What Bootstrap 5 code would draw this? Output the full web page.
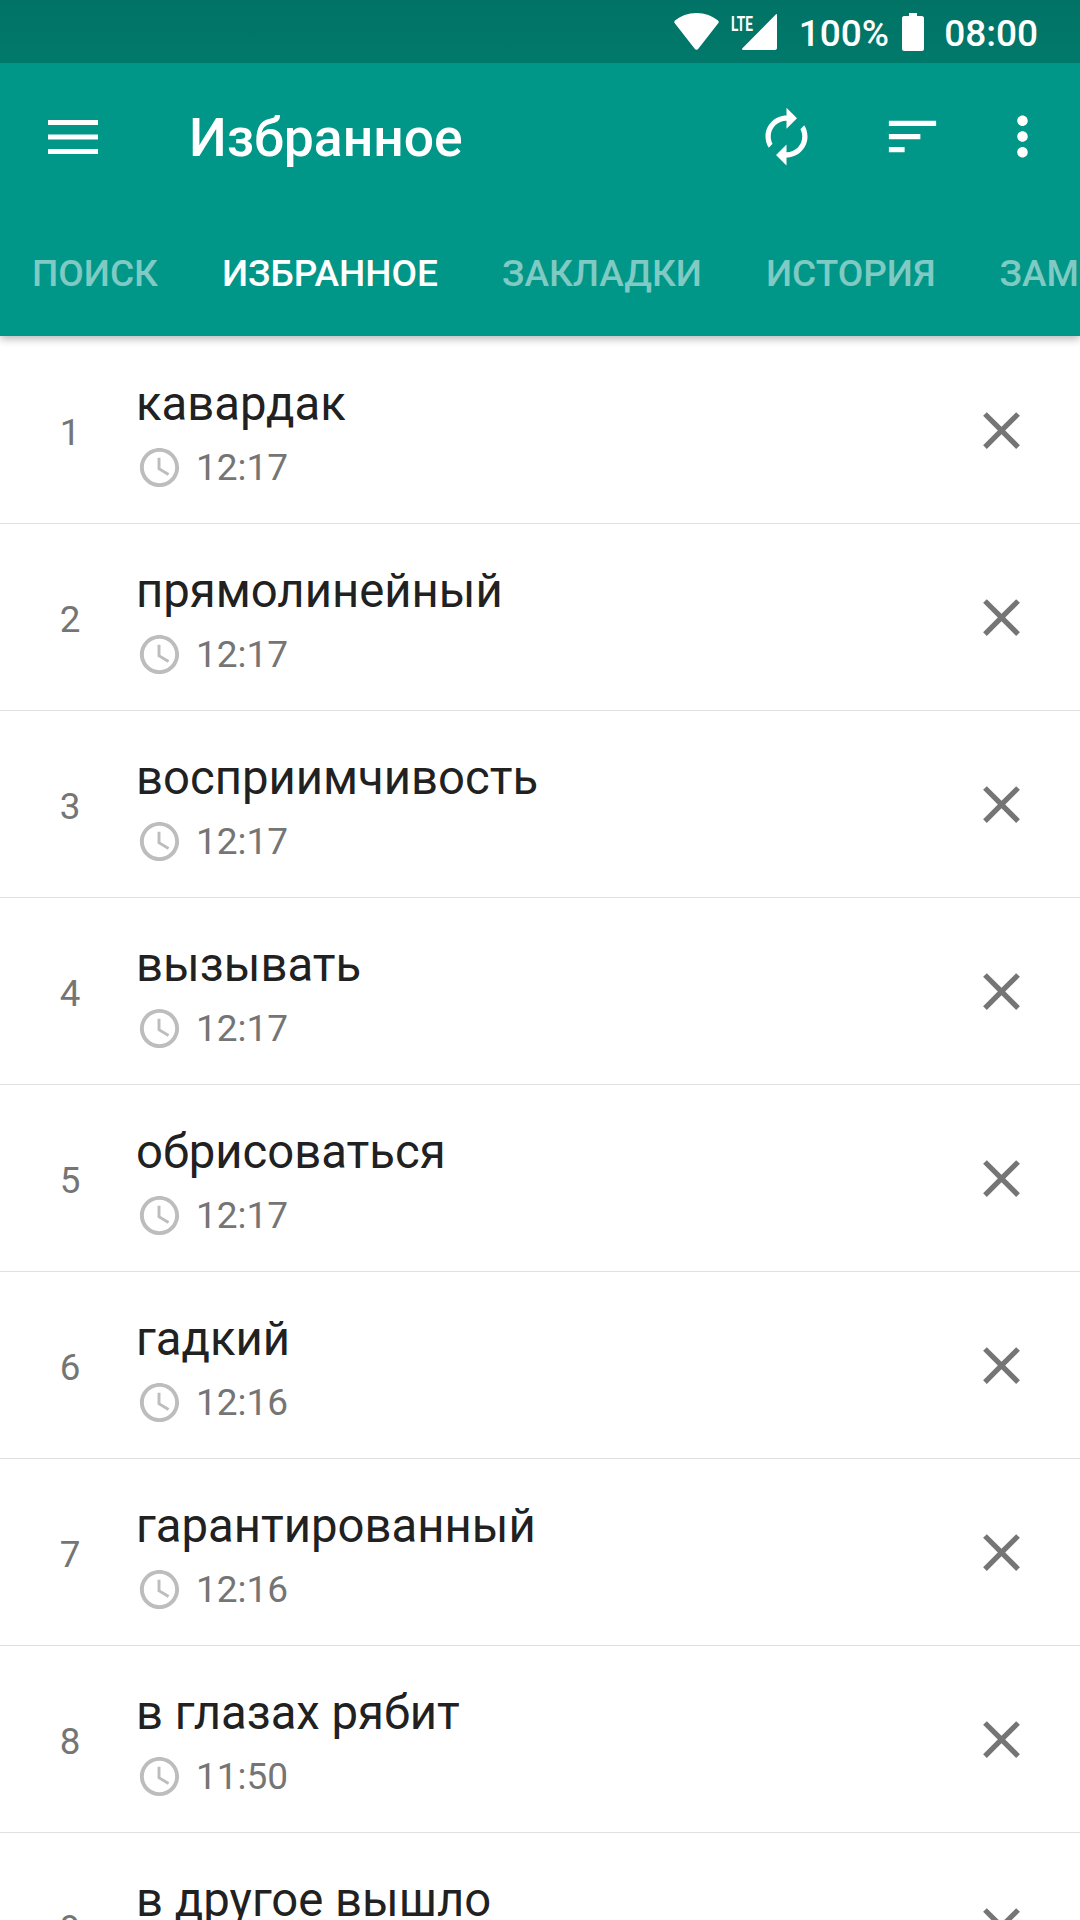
<!DOCTYPE html>
<html lang="ru">

<head>
    <meta charset="UTF-8">
    <meta name="viewport" content="width=device-width, initial-scale=1.0">
    <title>Избранное</title>

    <link href="https://cdn.jsdelivr.net/npm/bootstrap@5.3.0/dist/css/bootstrap.min.css" rel="stylesheet">
    <style>
        html, body {
            height: 100%;
            overflow: hidden;
        }

        body {
            font-family: Roboto, "Liberation Sans", sans-serif;
            background: #fff;
        }

        .app-header {
            background: #009688;
            color: #fff;
            box-shadow: 0 3px 8px rgba(0, 0, 0, 0.28);
            position: relative;
            z-index: 2;
        }

        .status-bar {
            height: 63px;
            background: linear-gradient(#007366, #00796b);
            padding-right: 42px;
            font-size: 37px;
            font-weight: 500;
            line-height: 1;
        }

        .status-bar svg {
            fill: #fff;
            display: block;
        }

        .status-text {
            padding-top: 4px;
        }

        .percent-text {
            margin-left: 21px;
        }

        .battery-icon {
            margin-left: 13px;
            margin-right: 20px;
        }

        .lte-mark {
            font-size: 20px;
            font-weight: 700;
            line-height: 1;
            width: 24px;
            height: 36px;
            margin-left: 12px;
            margin-right: -13px;
            transform: scaleX(0.68);
            transform-origin: left top;
        }

        .tool-bar {
            height: 147px;
            padding-right: 10px;
        }

        .tool-bar svg {
            fill: #fff;
            display: block;
        }

        .menu-slot {
            width: 189px;
            padding-left: 48px;
        }

        .screen-title {
            font-size: 53.5px;
            font-weight: 500;
            margin: 0;
            padding-top: 3px;
        }

        .tool-btn {
            width: 126px;
        }

        .tool-btn-narrow {
            width: 95px;
        }

        .tab-strip {
            height: 126px;
            overflow: hidden;
        }

        .tab-item {
            font-size: 37px;
            font-weight: 500;
            padding: 2px 32px 0;
            color: rgba(255, 255, 255, 0.5);
            white-space: nowrap;
        }

        .tab-item.is-current {
            color: #fff;
        }

        .word-list {
            padding-top: 1px;
        }

        .word-row {
            height: 187px;
            padding: 0;
            border-color: #e0e0e0;
            border-width: 0 0 2px;
        }

        .word-num {
            width: 136px;
            padding-left: 4px;
            padding-top: 5px;
            text-align: center;
            font-size: 36.75px;
            color: #757575;
        }

        .word-body {
            padding-top: 6px;
        }

        .word-text {
            font-size: 47.25px;
            line-height: 56px;
            color: #212121;
        }

        .word-time {
            font-size: 37px;
            line-height: 47px;
            color: #757575;
            margin-top: 12px;
        }

        .word-time svg {
            fill: #bdbdbd;
            margin-right: 13px;
            margin-left: 0;
        }

        .word-remove {
            margin-right: 47px;
            fill: #757575;
        }
    </style>
</head>

<body>
    <header class="app-header">
        <div class="status-bar d-flex align-items-center justify-content-end">
            <svg width="45" height="37" viewBox="0 0 45 37"><path d="M22.500 0C14 0 6.500 3 1 7.500c-1 1-1 2 0 3l19.500 25c1 1.600 3 1.600 4 0L44 10.500c1-1 1-2 0-3C38.500 3 31 0 22.500 0z"/></svg>
            <span class="lte-mark">LTE</span>
            <svg width="36" height="36" viewBox="0 0 36 36"><path d="M35 0v34c0 1-1 2-2 2H1c-1 0-1.300-1-.6-1.700L34 .3c.4-.4 1-.3 1 .7z"/></svg>
            <span class="status-text percent-text">100%</span>
            <svg class="battery-icon" width="22" height="38" viewBox="0 0 22 38"><path d="M7 0h8v3h5c1 0 2 1 2 2v31c0 1-1 2-2 2H2c-1 0-2-1-2-2V5c0-1 1-2 2-2h5z"/></svg>
            <span class="status-text">08:00</span>
        </div>
        <div class="tool-bar d-flex align-items-center">
            <div class="menu-slot">
                <svg width="50" height="34" viewBox="0 0 50 34"><path d="M0 0h50v5H0zM0 14.500h50v5H0zM0 29h50v5H0z"/></svg>
            </div>
            <h1 class="screen-title flex-grow-1">Избранное</h1>
            <div class="tool-btn d-flex justify-content-center">
                <svg width="63" height="63" viewBox="0 0 24 24"><path d="M12 6v3l4-4-4-4v3c-4.420 0-8 3.580-8 8 0 1.570.46 3.030 1.240 4.260L6.700 14.800c-.45-.83-.7-1.790-.7-2.800 0-3.310 2.690-6 6-6zm6.760 1.740L17.300 9.200c.44.84.7 1.790.7 2.800 0 3.310-2.690 6-6 6v-3l-4 4 4 4v-3c4.420 0 8-3.580 8-8 0-1.570-.46-3.030-1.240-4.260z"/></svg>
            </div>
            <div class="tool-btn d-flex justify-content-center">
                <svg width="63" height="63" viewBox="0 0 24 24"><path d="M3 18h6v-2H3v2zM3 6v2h18V6H3zm0 7h12v-2H3v2z"/></svg>
            </div>
            <div class="tool-btn-narrow d-flex justify-content-center">
                <svg width="63" height="63" viewBox="0 0 24 24"><path d="M12 8c1.100 0 2-.9 2-2s-.9-2-2-2-2 .9-2 2 .9 2 2 2zm0 2c-1.100 0-2 .9-2 2s.9 2 2 2 2-.9 2-2-.9-2-2-2zm0 6c-1.100 0-2 .9-2 2s.9 2 2 2 2-.9 2-2-.9-2-2-2z"/></svg>
            </div>
        </div>
        <div class="tab-strip d-flex align-items-center">
            <span class="tab-item">ПОИСК</span>
            <span class="tab-item is-current">ИЗБРАННОЕ</span>
            <span class="tab-item">ЗАКЛАДКИ</span>
            <span class="tab-item">ИСТОРИЯ</span>
            <span class="tab-item">ЗАМЕТКИ</span>
        </div>
    </header>

    <main class="list-group list-group-flush word-list" id="wordList"></main>

    <script src="https://cdn.jsdelivr.net/npm/bootstrap@5.3.0/dist/js/bootstrap.bundle.min.js"></script>
    <script>
        const words = [
            ["кавардак", "12:17"],
            ["прямолинейный", "12:17"],
            ["восприимчивость", "12:17"],
            ["вызывать", "12:17"],
            ["обрисоваться", "12:17"],
            ["гадкий", "12:16"],
            ["гарантированный", "12:16"],
            ["в глазах рябит", "11:50"],
            ["в другое вышло", "11:50"]
        ];

        let html = "";
        for (let i = 0; i < words.length; i++) {
            html += `
                <div class="list-group-item word-row d-flex align-items-center">
                    <div class="word-num">${i + 1}</div>
                    <div class="word-body flex-grow-1">
                        <div class="word-text">${words[i][0]}</div>
                        <div class="word-time d-flex align-items-center">
                            <svg width="47" height="47" viewBox="0 0 24 24"><path d="M11.990 2C6.470 2 2 6.480 2 12s4.470 10 9.990 10C17.520 22 22 17.520 22 12S17.520 2 11.990 2zM12 20c-4.420 0-8-3.580-8-8s3.580-8 8-8 8 3.580 8 8-3.580 8-8 8zm.5-13H11v6l5.250 3.150.75-1.230-4.500-2.670z"/></svg>
                            ${words[i][1]}
                        </div>
                    </div>
                    <svg class="word-remove" width="63" height="63" viewBox="0 0 24 24"><path d="M19 6.410L17.590 5 12 10.590 6.410 5 5 6.410 10.590 12 5 17.590 6.410 19 12 13.410 17.590 19 19 17.590 13.410 12z"/></svg>
                </div>`;
        }
        document.getElementById("wordList").innerHTML = html;
    </script>
</body>

</html>
